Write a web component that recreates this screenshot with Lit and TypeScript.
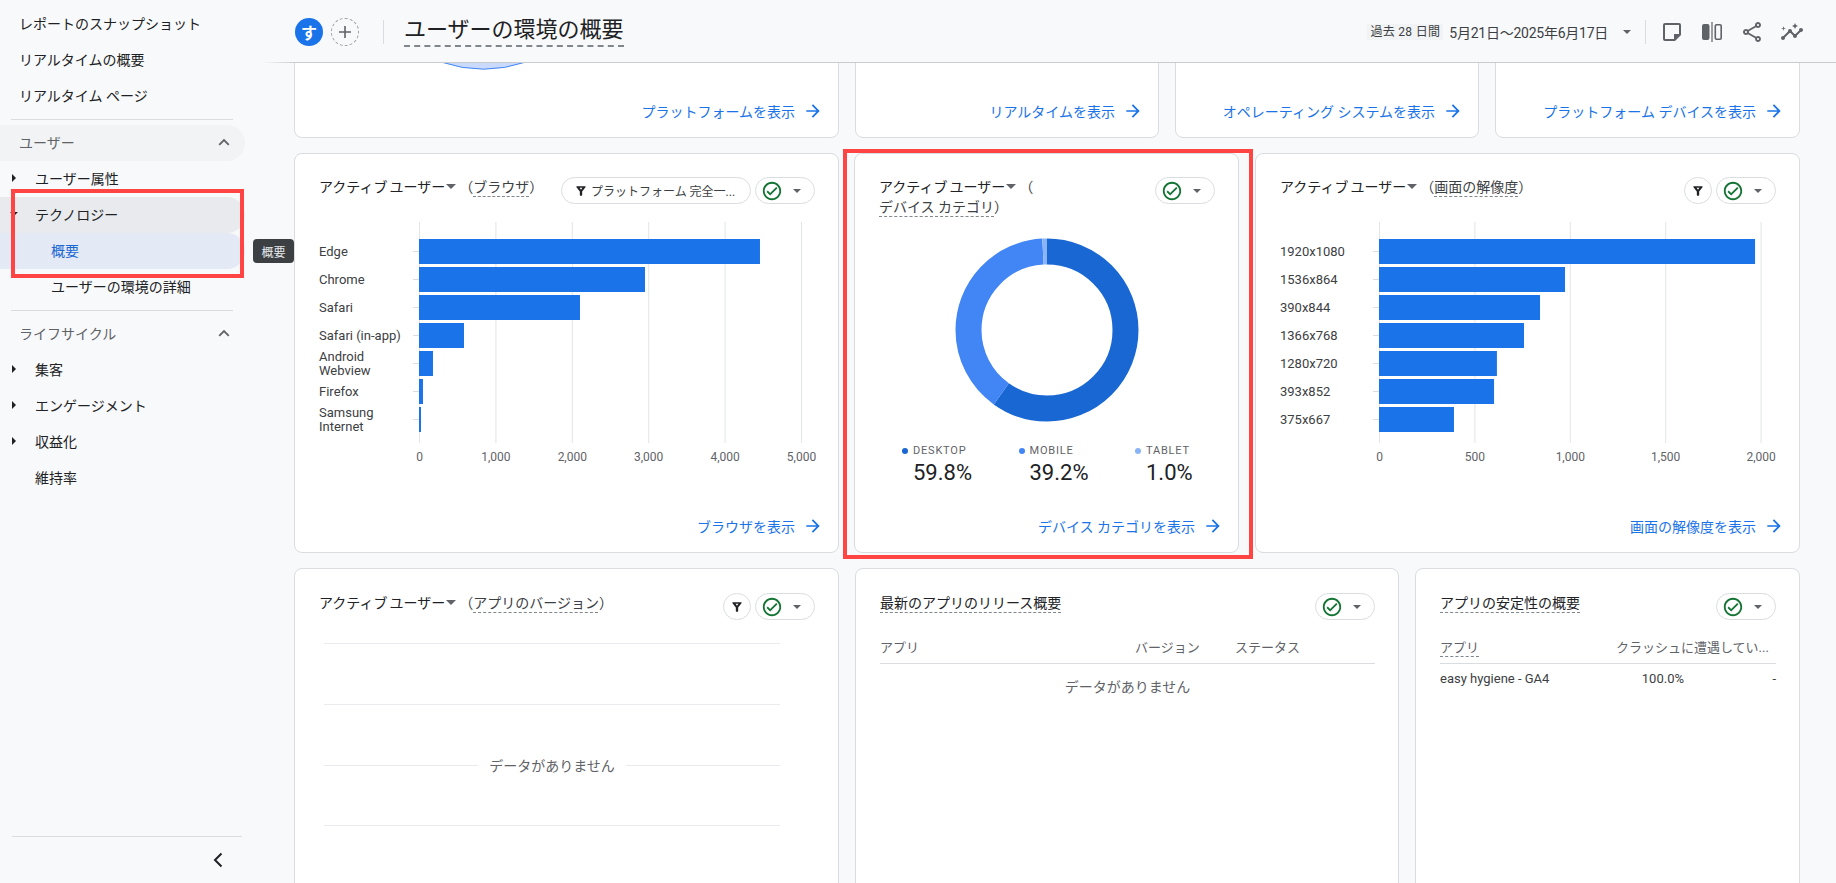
import { LitElement, html, css, svg } from "lit";
import { customElement } from "lit/decorators.js";

const FILTER =
  "M4.25 5.61C6.27 8.2 10 13 10 13v6c0 .55.45 1 1 1h2c.55 0 1-.45 1-1v-6s3.72-4.8 5.74-7.39c.51-.66.04-1.61-.79-1.61H5.04c-.83 0-1.3.95-.79 1.61zM9.5 6.5h5L12 9.700z";
const CHECK =
  "M12 2C6.48 2 2 6.48 2 12s4.48 10 10 10 10-4.48 10-10S17.52 2 12 2zm0 18c-4.41 0-8-3.59-8-8s3.59-8 8-8 8 3.59 8 8-3.59 8-8 8zm4.59-12.42L10 14.17l-2.59-2.58L6 13l4 4 8-8z";

type Chart = {
  x0: number;
  scale: number;
  ticks: number[];
  rows: { label: string[]; value: number }[];
};

const BROWSERS: Chart = {
  x0: 100,
  scale: 0.0764,
  ticks: [0, 1000, 2000, 3000, 4000, 5000],
  rows: [
    { label: ["Edge"], value: 4463 },
    { label: ["Chrome"], value: 2958 },
    { label: ["Safari"], value: 2107 },
    { label: ["Safari (in-app)"], value: 589 },
    { label: ["Android", "Webview"], value: 183 },
    { label: ["Firefox"], value: 52 },
    { label: ["Samsung", "Internet"], value: 26 },
  ],
};

const SCREENS: Chart = {
  x0: 99,
  scale: 0.1908,
  ticks: [0, 500, 1000, 1500, 2000],
  rows: [
    { label: ["1920x1080"], value: 1971 },
    { label: ["1536x864"], value: 975 },
    { label: ["390x844"], value: 844 },
    { label: ["1366x768"], value: 760 },
    { label: ["1280x720"], value: 618 },
    { label: ["393x852"], value: 603 },
    { label: ["375x667"], value: 393 },
  ],
};

const DEVICES = [
  { name: "DESKTOP", pct: 59.8, color: "#1967d2" },
  { name: "MOBILE", pct: 39.2, color: "#4285f4" },
  { name: "TABLET", pct: 1.0, color: "#8ab4f8" },
];

function barChart(c: Chart) {
  const top = 17;
  const pitch = 28;
  return html`<svg class="chart" width="495" height="248" viewBox="0 0 495 248">
    ${c.ticks.map((t) => {
      const x = c.x0 + t * c.scale + 0.5;
      return svg`<line x1=${x} x2=${x} y1="0" y2="221" stroke="#e3e4e6"></line>
        <text x=${x} y="239" text-anchor="middle" class="tick">${t.toLocaleString("en-US")}</text>`;
    })}
    ${c.rows.map((r, i) => {
      const y = top + i * pitch;
      const mid = y + 12.5;
      return svg`<line x1=${c.x0 - 6} x2=${c.x0} y1=${mid} y2=${mid} stroke="#dadce0"></line>
        <rect x=${c.x0} y=${y} width=${r.value * c.scale} height="25" fill="#1a73e8"></rect>
        ${r.label.map(
          (l, j) =>
            svg`<text x="0" y=${mid + 4.5 + (j - (r.label.length - 1) / 2) * 14} class="cat">${l}</text>`
        )}`;
    })}
  </svg>`;
}

function donut() {
  const cx = 92;
  const cy = 92;
  const r = 78.5;
  const len = 2 * Math.PI * r;
  let off = 0;
  return html`<svg class="donut" width="184" height="184" viewBox="0 0 184 184">
    ${DEVICES.map((d) => {
      const dash = (d.pct / 100) * len;
      const seg = svg`<circle cx=${cx} cy=${cy} r=${r} fill="none" stroke=${d.color} stroke-width="26"
        stroke-dasharray="${dash} ${len - dash}" stroke-dashoffset=${-off}
        transform="rotate(-90 ${cx} ${cy})"></circle>`;
      off += dash;
      return seg;
    })}
  </svg>`;
}

function link(text: string) {
  return html`<a class="more">
    <span>${text}</span>
    <svg width="20" height="20" viewBox="0 0 20 20">
      <path fill="#1a73e8" d="M10 3.3 8.8 4.5l4.6 4.7H3.3v1.6h10.1l-4.6 4.7 1.2 1.2 6.7-6.7z"></path>
    </svg>
  </a>`;
}

function checkChip() {
  return html`<span class="chip check">
    <svg width="22" height="22" viewBox="0 0 24 24"><path fill="#137333" d=${CHECK}></path></svg>
    <i class="tri"></i>
  </span>`;
}

function filterIcon() {
  return html`<svg width="14" height="14" viewBox="0 0 24 24">
    <path fill="#202124" fill-rule="evenodd" d=${FILTER}></path>
  </svg>`;
}

function filterChip() {
  return html`<span class="chip round">${filterIcon()}</span>`;
}

function metric() {
  return html`<span class="metric">アクティブ ユーザー</span><i class="tri title-tri"></i>`;
}

@customElement("app-root")
export class AppRoot extends LitElement {
  static styles = css`
    :host {
      display: block;
      height: 883px;
      overflow: hidden;
      background: #f8f9fa;
      font-family: Roboto, "Noto Sans CJK JP", sans-serif;
      font-size: 14px;
      color: #202124;
    }
    .page {
      display: flex;
      height: 883px;
    }

    /* sidebar */
    .side {
      position: relative;
      flex: none;
      width: 294px;
      height: 883px;
      display: flex;
      flex-direction: column;
      padding-top: 6px;
      box-sizing: border-box;
    }
    .item {
      flex: none;
      display: flex;
      align-items: center;
      height: 36px;
      width: 245px;
      border-radius: 0 18px 18px 0;
      padding: 0 0 2px 19px;
      box-sizing: border-box;
      white-space: nowrap;
    }
    .item.l2 {
      padding-left: 12px;
    }
    .item.l2plain {
      padding-left: 35px;
    }
    .item.l3 {
      padding-left: 51px;
    }
    .item.sec {
      color: #5f6368;
      justify-content: space-between;
      padding-right: 15px;
    }
    .item.sec.open {
      background: #f1f3f4;
    }
    .item.tech {
      background: #e8eaed;
    }
    .item.cur {
      background: #e3e9f5;
      color: #1967d2;
    }
    .caret {
      flex: none;
      width: 23px;
    }
    .caret::before {
      content: "";
      display: block;
      width: 0;
      height: 0;
      border-left: 4px solid #202124;
      border-top: 4px solid transparent;
      border-bottom: 4px solid transparent;
    }
    .caret.down::before {
      margin-left: -2px;
      border-left: 4px solid transparent;
      border-right: 4px solid transparent;
      border-top: 4px solid #202124;
      border-bottom: 0;
    }
    .side hr {
      flex: none;
      width: 222px;
      height: 1px;
      margin: 5px 0 5px 11px;
      border: 0;
      background: #dadce0;
    }
    .side-foot {
      margin-top: auto;
      margin-left: 12px;
      width: 230px;
      height: 47px;
      border-top: 1px solid #dadce0;
      display: flex;
      align-items: center;
      justify-content: flex-end;
      padding-right: 18px;
      box-sizing: border-box;
    }
    .tip {
      position: absolute;
      left: 253px;
      top: 239px;
      width: 41px;
      height: 24px;
      border-radius: 4px;
      background: #3c4043;
      color: #e8eaed;
      font-size: 12px;
      display: flex;
      align-items: center;
      justify-content: center;
    }
    .mark {
      position: absolute;
      border: 4px solid #ff4444;
      box-sizing: border-box;
      pointer-events: none;
    }
    .mark.m1 {
      left: 11px;
      top: 189px;
      width: 233px;
      height: 89px;
    }
    .mark.m2 {
      left: -12px;
      top: -5px;
      right: -15px;
      bottom: -7px;
    }

    /* top bar */
    .right {
      flex: none;
      width: 1542px;
      display: flex;
      flex-direction: column;
      height: 883px;
    }
    .bar {
      position: relative;
      z-index: 2;
      flex: none;
      height: 63px;
      box-sizing: border-box;
      border-bottom: 1px solid #c9cbce;
      background: #f8f9fa;
      display: flex;
      align-items: center;
      padding: 2px 32px 0 1px;
    }
    .bar::before {
      content: "";
      position: absolute;
      left: -32px;
      bottom: -1px;
      width: 32px;
      height: 1px;
      background: linear-gradient(to right, transparent, #c9cbce);
    }
    .ava {
      width: 28px;
      height: 28px;
      border-radius: 50%;
      background: #1a73e8;
      color: #fff;
      font-weight: 700;
      font-size: 16px;
      display: flex;
      align-items: center;
      justify-content: center;
    }
    .add {
      margin-left: 8px;
      width: 28px;
      height: 28px;
      box-sizing: border-box;
      border-radius: 50%;
      border: 1px dashed #9aa0a6;
      display: flex;
      align-items: center;
      justify-content: center;
    }
    .vr {
      flex: none;
      width: 1px;
      height: 24px;
      background: #dadce0;
    }
    .bar .vr.a {
      margin-left: 24px;
    }
    .title {
      margin-left: 20px;
      font-size: 22px;
      line-height: 30px;
      border-bottom: 2px dashed #80868b;
      margin-top: -3px;
    }
    .range {
      margin-left: auto;
      background: #f1f3f4;
      height: 16px;
      line-height: 16px;
      width: 76px;
      text-align: center;
      font-size: 12px;
      letter-spacing: 0.3px;
      color: #3c4043;
      white-space: nowrap;
    }
    .dates {
      margin-left: 6px;
      color: #3c4043;
      letter-spacing: -0.25px;
      white-space: nowrap;
    }
    .bar .tri {
      margin-left: 15px;
    }
    .bar .vr.b {
      margin-left: 14px;
      margin-right: 14px;
    }
    .tools {
      display: flex;
      gap: 16px;
    }

    /* content */
    .body {
      flex: 1;
      min-height: 0;
      overflow: hidden;
      padding-right: 36px;
      display: flex;
      flex-direction: column;
      gap: 15px;
    }
    .row {
      flex: none;
      display: grid;
      column-gap: 16px;
    }
    .r0 {
      grid-template-columns: 545px 304px 304px 305px;
      height: 96px;
      margin-top: -21px;
    }
    .r1 {
      grid-template-columns: 545px 384px 545px;
      height: 400px;
    }
    .r1 .card:nth-child(2) {
      margin-left: -1px;
    }
    .r2 {
      grid-template-columns: 545px 544px 385px;
      height: 340px;
    }
    .r2 .card {
      padding-top: 24px;
    }
    .card {
      position: relative;
      box-sizing: border-box;
      background: #fff;
      border: 1px solid #dadce0;
      border-radius: 8px;
      padding: 23px 23px 14px 24px;
      display: flex;
      flex-direction: column;
    }
    .head {
      flex: none;
      display: flex;
      justify-content: space-between;
      align-items: flex-start;
    }
    .ct {
      line-height: 20px;
      color: #3c4043;
    }
    .metric {
      color: #202124;
      word-spacing: -1.500px;
    }
    .dim {
      text-decoration: underline dashed #80868b 1px;
      text-underline-offset: 4px;
      text-decoration-skip-ink: none;
    }
    .ct.plain {
      color: #202124;
    }
    .chips {
      flex: none;
      display: flex;
      gap: 4px;
    }
    .chip {
      box-sizing: border-box;
      height: 27px;
      border: 1px solid #dadce0;
      border-radius: 14px;
      display: flex;
      align-items: center;
      background: #fff;
    }
    .chip.round {
      width: 28px;
      justify-content: center;
    }
    .chip.check {
      width: 60px;
      padding-left: 5px;
    }
    .chip.check .tri {
      margin-left: 10px;
    }
    .chip.text {
      width: 190px;
      padding-left: 12px;
      font-size: 12px;
      color: #3c4043;
      white-space: nowrap;
      gap: 3px;
    }
    i.tri {
      display: inline-block;
      flex: none;
      width: 0;
      height: 0;
      border-left: 4px solid transparent;
      border-right: 4px solid transparent;
      border-top: 4px solid #5f6368;
    }
    i.title-tri {
      margin: 0 3px 3px 1px;
      border-left-width: 5px;
      border-right-width: 5px;
      border-top-width: 5px;
    }
    .more {
      margin-top: auto;
      margin-right: -8px;
      align-self: flex-end;
      display: flex;
      align-items: center;
      gap: 8px;
      color: #1a73e8;
      height: 24px;
      white-space: nowrap;
    }
    .arc {
      position: absolute;
      left: 146px;
      top: 19px;
    }
    .chart {
      display: block;
      margin-top: 18px;
      flex: none;
      overflow: visible;
    }
    .chart .tick {
      font-size: 12px;
      fill: #5f6368;
    }
    .chart .cat {
      font-size: 13px;
      fill: #3c4043;
    }
    .donut {
      display: block;
      flex: none;
      margin: 21px auto 0;
    }
    .legend {
      display: grid;
      grid-template-columns: repeat(3, 116.5px);
      margin: 22px 0 0 23px;
    }
    .lab {
      display: flex;
      align-items: center;
      gap: 5px;
      font-size: 11px;
      letter-spacing: 0.8px;
      color: #5f6368;
      line-height: 14px;
    }
    .dot {
      width: 6px;
      height: 6px;
      border-radius: 50%;
    }
    .val {
      margin-left: 11px;
      font-size: 22px;
      line-height: 28px;
      color: #202124;
      margin-top: 1px;
    }
    .rules {
      margin: 23px 0 0 5px;
      width: 456px;
    }
    .rule {
      height: 1px;
      background: #e8eaed;
      flex: 1;
    }
    .sp {
      height: 60px;
    }
    .sp.last {
      height: 59px;
    }
    .nodata-line {
      display: flex;
      align-items: center;
      height: 1px;
      gap: 11px;
      white-space: nowrap;
      color: #5f6368;
    }
    .nodata-line .msg {
      margin-top: -2px;
    }
    .tbl-h {
      display: grid;
      height: 30px;
      padding-bottom: 2px;
      margin-top: 11px;
      align-items: center;
      font-size: 13px;
      color: #5f6368;
      border-bottom: 1px solid #dadce0;
      box-sizing: content-box;
      white-space: nowrap;
    }
    .rel .tbl-h {
      grid-template-columns: 255px 100px 1fr;
    }
    .sta .tbl-h,
    .sta .tbl-r {
      grid-template-columns: 176px 68px 1fr;
    }
    .sta .tbl-h span:nth-child(2) {
      grid-column: 2 / 4;
    }
    .nodata {
      text-align: center;
      color: #5f6368;
      margin-top: 12px;
    }
    .tbl-r {
      display: grid;
      height: 28px;
      align-items: center;
      font-size: 13px;
      color: #3c4043;
      white-space: nowrap;
    }
    .num {
      text-align: right;
    }
  `;

  private navItem(text: string, cls = "") {
    return html`<div class="item ${cls}">${text}</div>`;
  }

  private caretItem(text: string, down = false, cls = "") {
    return html`<div class="item l2 ${cls}">
      <span class="caret ${down ? "down" : ""}"></span>${text}
    </div>`;
  }

  private section(text: string, open = false) {
    return html`<div class="item sec ${open ? "open" : ""}">
      ${text}
      <svg width="12" height="8" viewBox="0 0 12 8">
        <path d="M1.2 6.8 6 2l4.8 4.8" fill="none" stroke="#5f6368" stroke-width="1.8"></path>
      </svg>
    </div>`;
  }

  private sidebar() {
    return html`<nav class="side">
      ${this.navItem("レポートのスナップショット")}
      ${this.navItem("リアルタイムの概要")}
      ${this.navItem("リアルタイム ページ")}
      <hr />
      ${this.section("ユーザー", true)}
      ${this.caretItem("ユーザー属性")}
      ${this.caretItem("テクノロジー", true, "tech")}
      ${this.navItem("概要", "l3 cur")}
      ${this.navItem("ユーザーの環境の詳細", "l3")}
      <hr />
      ${this.section("ライフサイクル")}
      ${this.caretItem("集客")}
      ${this.caretItem("エンゲージメント")}
      ${this.caretItem("収益化")}
      ${this.navItem("維持率", "l2plain")}
      <div class="side-foot">
        <svg width="12" height="16" viewBox="0 0 12 16">
          <path d="M9.5 1.5 3 8l6.500 6.500" fill="none" stroke="#202124" stroke-width="2"></path>
        </svg>
      </div>
      <div class="tip">概要</div>
      <div class="mark m1"></div>
    </nav>`;
  }

  private topbar() {
    return html`<header class="bar">
      <span class="ava">す</span>
      <span class="add">
        <svg width="16" height="16" viewBox="0 0 16 16">
          <path d="M8 2v12M2 8h12" stroke="#5f6368" stroke-width="1.6"></path>
        </svg>
      </span>
      <span class="vr a"></span>
      <span class="title">ユーザーの環境の概要</span>
      <span class="range">過去 28 日間</span>
      <span class="dates">5月21日～2025年6月17日</span>
      <i class="tri"></i>
      <span class="vr b"></span>
      <span class="tools">
        <svg width="24" height="24" viewBox="0 0 24 24">
          <path fill="#5f6368" fill-rule="evenodd" d="M5 3h14a2 2 0 0 1 2 2v10l-6 6H5a2 2 0 0 1-2-2V5a2 2 0 0 1 2-2zm0 2v14h9v-5h5V5z"></path>
          <path fill="#5f6368" d="M15.500 15.500h3l-3 3z"></path>
        </svg>
        <svg width="24" height="24" viewBox="0 0 24 24">
          <path fill="#5f6368" fill-rule="evenodd" d="M4 4h3.500a2 2 0 0 1 2 2v12a2 2 0 0 1-2 2H4a2 2 0 0 1-2-2V6a2 2 0 0 1 2-2zM11.400 2h1.200v20h-1.200zM16.500 4H20a2 2 0 0 1 2 2v12a2 2 0 0 1-2 2h-3.500a2 2 0 0 1-2-2V6a2 2 0 0 1 2-2zm0 1.600a.4.4 0 0 0-.4.4v12a.4.4 0 0 0 .4.4H20a.4.4 0 0 0 .4-.4V6a.4.4 0 0 0-.4-.4z"></path>
        </svg>
        <svg width="24" height="24" viewBox="0 0 24 24">
          <path fill="#5f6368" d="M18 16.080c-.76 0-1.440.3-1.960.77L8.910 12.700c.05-.23.09-.46.09-.7s-.04-.47-.09-.7l7.050-4.110c.54.5 1.250.81 2.040.81 1.660 0 3-1.340 3-3s-1.340-3-3-3-3 1.340-3 3c0 .24.04.47.09.7L8.040 9.810C7.500 9.310 6.790 9 6 9c-1.660 0-3 1.340-3 3s1.340 3 3 3c.79 0 1.500-.31 2.040-.81l7.120 4.160c-.05.21-.08.43-.08.65 0 1.610 1.310 2.920 2.920 2.920 1.610 0 2.920-1.310 2.920-2.920s-1.310-2.920-2.920-2.920zM18 4c.55 0 1 .45 1 1s-.45 1-1 1-1-.45-1-1 .45-1 1-1zM6 13c-.55 0-1-.45-1-1s.45-1 1-1 1 .45 1 1-.45 1-1 1zm12 7.020c-.55 0-1-.45-1-1s.45-1 1-1 1 .45 1 1-.45 1-1 1z"></path>
        </svg>
        <svg width="24" height="24" viewBox="0 0 24 24">
          <path fill="#5f6368" d="M21 8c-1.450 0-2.260 1.440-1.930 2.510l-3.550 3.560c-.3-.09-.74-.09-1.040 0l-2.550-2.550C12.270 10.450 11.460 9 10 9c-1.450 0-2.270 1.440-1.930 2.520l-4.560 4.550C2.440 15.740 1 16.550 1 18c0 1.100.9 2 2 2 1.450 0 2.260-1.440 1.930-2.510l4.550-4.560c.3.09.74.09 1.040 0l2.550 2.550C12.730 16.550 13.540 18 15 18c1.450 0 2.270-1.440 1.930-2.520l3.560-3.550c1.070.33 2.510-.48 2.510-1.930 0-1.100-.9-2-2-2zM15 9l.94-2.070L18 6l-2.060-.93L15 3l-.92 2.070L12 6l2.080.93zM3.500 11 4 9l2-.5L4 8l-.5-2L3 8l-2 .5L3 9z"></path>
        </svg>
      </span>
    </header>`;
  }

  private topRow() {
    return html`<div class="row r0">
      <section class="card">
        <svg class="arc" width="85" height="9" viewBox="0 0 85 9">
          <path d="M0 0A132.500 132.500 0 0 0 85 0z" fill="#c9dafa"></path>
          <path d="M0 0A132.500 132.500 0 0 0 85 0" fill="none" stroke="#4285f4" stroke-width="1"></path>
        </svg>
        ${link("プラットフォームを表示")}
      </section>
      <section class="card">${link("リアルタイムを表示")}</section>
      <section class="card">${link("オペレーティング システムを表示")}</section>
      <section class="card">${link("プラットフォーム デバイスを表示")}</section>
    </div>`;
  }

  private middleRow() {
    return html`<div class="row r1">
      <section class="card">
        <div class="head">
          <div class="ct">${metric()}（<span class="dim">ブラウザ</span>）</div>
          <div class="chips">
            <span class="chip text">${filterIcon()} プラットフォーム 完全一...</span>
            ${checkChip()}
          </div>
        </div>
        ${barChart(BROWSERS)} ${link("ブラウザを表示")}
      </section>
      <section class="card">
        <div class="head">
          <div class="ct">${metric()}（<br /><span class="dim">デバイス カテゴリ</span>）</div>
          <div class="chips">${checkChip()}</div>
        </div>
        ${donut()}
        <div class="legend">
          ${DEVICES.map(
            (d) => html`<div>
              <div class="lab"><span class="dot" style="background:${d.color}"></span>${d.name}</div>
              <div class="val">${d.pct.toFixed(1)}%</div>
            </div>`
          )}
        </div>
        ${link("デバイス カテゴリを表示")}
        <div class="mark m2"></div>
      </section>
      <section class="card">
        <div class="head">
          <div class="ct">${metric()}（<span class="dim">画面の解像度</span>）</div>
          <div class="chips">${filterChip()} ${checkChip()}</div>
        </div>
        ${barChart(SCREENS)} ${link("画面の解像度を表示")}
      </section>
    </div>`;
  }

  private bottomRow() {
    return html`<div class="row r2">
      <section class="card">
        <div class="head">
          <div class="ct">${metric()}（<span class="dim">アプリのバージョン</span>）</div>
          <div class="chips">${filterChip()} ${checkChip()}</div>
        </div>
        <div class="rules">
          <div class="rule"></div>
          <div class="sp"></div>
          <div class="rule"></div>
          <div class="sp"></div>
          <div class="nodata-line">
            <span class="rule"></span><span class="msg">データがありません</span><span class="rule"></span>
          </div>
          <div class="sp last"></div>
          <div class="rule"></div>
        </div>
      </section>
      <section class="card rel">
        <div class="head">
          <div class="ct plain"><span class="dim">最新のアプリのリリース概要</span></div>
          <div class="chips">${checkChip()}</div>
        </div>
        <div class="tbl-h"><span>アプリ</span><span>バージョン</span><span>ステータス</span></div>
        <div class="nodata">データがありません</div>
      </section>
      <section class="card sta">
        <div class="head">
          <div class="ct plain"><span class="dim">アプリの安定性の概要</span></div>
          <div class="chips">${checkChip()}</div>
        </div>
        <div class="tbl-h"><span class="dim">アプリ</span><span>クラッシュに遭遇してい...</span></div>
        <div class="tbl-r"><span>easy hygiene - GA4</span><span class="num">100.0%</span><span class="num">-</span></div>
      </section>
    </div>`;
  }

  render() {
    return html`<div class="page">
      ${this.sidebar()}
      <div class="right">
        ${this.topbar()}
        <main class="body">${this.topRow()} ${this.middleRow()} ${this.bottomRow()}</main>
      </div>
    </div>`;
  }
}
